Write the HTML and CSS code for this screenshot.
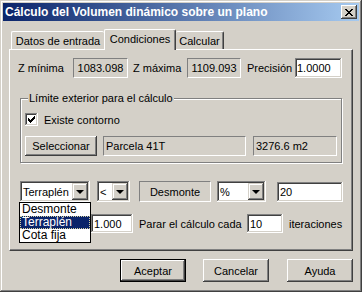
FILE: index.html
```html
<!doctype html>
<html lang="es">
    <head>
        <meta charset="UTF-8" />
        <title>Cálculo del Volumen dinámico sobre un plano</title>
        <link rel="stylesheet" href="styles.css">
    </head>
    <body>
        <div class="window">
            <div class="titlebar">
                <span class="title">Cálculo del Volumen dinámico sobre un plano</span>
                <span class="close">
                    <svg width="8" height="7" viewBox="0 0 8 7">
                        <path d="M0 0h2v1h-2zM6 0h2v1h-2zM1 1h2v1h-2zM5 1h2v1h-2zM2 2h4v1h-4zM3 3h2v1h-2zM2 4h4v1h-4zM1 5h2v1h-2zM5 5h2v1h-2zM0 6h2v1h-2zM6 6h2v1h-2z" fill="#000" />
                    </svg>
                </span>
            </div>

            <div class="tabs">
                <div class="tab tab-datos">Datos de entrada</div>
                <div class="tab tab-cond">Condiciones</div>
                <div class="tab tab-calc">Calcular</div>
            </div>

            <div class="panel">
                <div class="row row-z">
                    <span class="lbl lbl-zmin">Z mínima</span>
                    <span class="static zmin">1083.098</span>
                    <span class="lbl lbl-zmax">Z máxima</span>
                    <span class="static zmax">1109.093</span>
                    <span class="lbl lbl-prec">Precisión</span>
                    <span class="edit prec">1.0000</span>
                </div>

                <div class="group">
                    <div class="group-title">Límite exterior para el cálculo</div>
                    <div class="check-row">
                        <span class="check">
                            <svg width="7" height="7" viewBox="0 0 7 7">
                                <path d="M6 0h1v3h-1zM5 1h1v3h-1zM4 2h1v3h-1zM0 2h1v3h-1zM1 3h1v3h-1zM2 4h1v3h-1zM3 3h1v3h-1z" fill="#000" />
                            </svg>
                        </span>
                        <span class="check-label">Existe contorno</span>
                    </div>
                    <div class="row sel-row">
                        <span class="btn btn-sel">Seleccionar</span>
                        <span class="static parcela">Parcela 41T</span>
                        <span class="static area">3276.6 m2</span>
                    </div>
                </div>

                <div class="row row-cond">
                    <div class="combo combo-tipo">
                        <span class="combo-text">Terraplén</span>
                        <span class="drop"><span class="arrow"></span></span>
                        <ul class="list">
                            <li>Desmonte</li>
                            <li class="selected">Terraplén</li>
                            <li>Cota fija</li>
                        </ul>
                    </div>
                    <div class="combo combo-op">
                        <span class="combo-text">&lt;</span>
                        <span class="drop"><span class="arrow"></span></span>
                    </div>
                    <span class="static ref">Desmonte</span>
                    <div class="combo combo-unit">
                        <span class="combo-text">%</span>
                        <span class="drop"><span class="arrow"></span></span>
                    </div>
                    <span class="edit valor">20</span>
                </div>

                <div class="row row-iter">
                    <span class="edit tol">1.000</span>
                    <span class="lbl lbl-parar">Parar el cálculo cada</span>
                    <span class="edit iter">10</span>
                    <span class="lbl lbl-iter">iteraciones</span>
                </div>
            </div>

            <div class="buttons">
                <span class="btn btn-dlg btn-default">Aceptar</span>
                <span class="btn btn-dlg btn-cancel">Cancelar</span>
                <span class="btn btn-dlg btn-help">Ayuda</span>
            </div>
        </div>
    </body>
</html>
```

FILE: styles.css
```css
* {
    box-sizing: border-box;
}
body {
    margin: 0;
    font-family: "Liberation Sans", Arial, sans-serif;
    font-size: 11px;
    color: #000;
    background: #d4d0c8;
}
.window {
    width: 362px;
    height: 292px;
    padding: 3px;
    background: #d4d0c8;
    box-shadow: inset -1px -1px #404040, inset 1px 1px #d4d0c8,
        inset -2px -2px #808080, inset 2px 2px #fff;
}

/* title bar */
.titlebar {
    height: 18px;
    display: flex;
    align-items: center;
    padding-left: 2px;
    background: linear-gradient(to right, #0a246a, #a6caf0);
}
.title {
    color: #fff;
    font-weight: bold;
    font-size: 12px;
}
.close {
    margin-left: auto;
    margin-right: 2px;
    width: 16px;
    height: 14px;
    display: flex;
    align-items: center;
    justify-content: center;
    background: #d4d0c8;
    box-shadow: inset -1px -1px #404040, inset 1px 1px #fff,
        inset -2px -2px #808080, inset 2px 2px #d4d0c8;
}
.close svg {
    display: block;
}

/* tabs */
.tabs {
    height: 28px;
    display: flex;
    align-items: flex-end;
    padding-left: 8px;
}
.tab {
    height: 18px;
    display: flex;
    align-items: center;
    justify-content: center;
    border-top: 1px solid #fff;
    border-left: 1px solid #fff;
    border-right: 1px solid #404040;
    border-radius: 2px 2px 0 0;
    box-shadow: inset -1px 0 #808080;
}
.tab-datos {
    width: 93px;
    border-right: none;
    box-shadow: none;
}
.tab-cond {
    width: 72px;
    height: 21px;
    margin-bottom: -1px;
    padding-bottom: 3px;
    position: relative;
    z-index: 1;
    background: #d4d0c8;
}
.tab-calc {
    width: 48px;
    border-left: none;
}

/* panel */
.panel {
    margin: 0 6px;
    height: 202px;
    padding: 8px 0 0 8px;
    border-top: 1px solid #fff;
    border-left: 1px solid #fff;
    border-right: 1px solid #404040;
    border-bottom: 1px solid #404040;
    box-shadow: inset -1px -1px #808080;
}
.row {
    display: flex;
    align-items: center;
}
.static {
    height: 20px;
    display: flex;
    align-items: center;
    padding-left: 2px;
    border-top: 1px solid #808080;
    border-left: 1px solid #808080;
    border-right: 1px solid #fff;
    border-bottom: 1px solid #fff;
}
.edit {
    height: 20px;
    display: flex;
    align-items: center;
    padding-left: 3px;
    background: #fff;
    box-shadow: inset -1px -1px #fff, inset 1px 1px #808080,
        inset -2px -2px #d4d0c8, inset 2px 2px #404040;
}
.btn {
    display: flex;
    align-items: center;
    justify-content: center;
    background: #d4d0c8;
    box-shadow: inset -1px -1px #404040, inset 1px 1px #fff,
        inset -2px -2px #808080, inset 2px 2px #d4d0c8;
}

/* row: z */
.row-z {
    height: 20px;
}
.lbl-zmin {
    width: 55px;
}
.zmin {
    width: 55px;
    justify-content: center;
    padding-left: 0;
}
.lbl-zmax {
    width: 54px;
    margin-left: 5px;
}
.zmax {
    width: 54px;
    justify-content: center;
    padding-left: 0;
}
.lbl-prec {
    width: 48px;
    margin-left: 6px;
}
.prec {
    width: 47px;
    padding-left: 2px;
}

/* group */
.group {
    margin: 20px 0 0 2px;
    width: 322px;
    height: 65px;
    padding-left: 4px;
    border: 1px solid #808080;
    box-shadow: 1px 1px #fff, inset 1px 1px #fff;
}
.group-title {
    width: fit-content;
    line-height: 13px;
    margin: -7px 0 0 3px;
    padding: 0 1px;
    background: #d4d0c8;
}
.check-row {
    margin-top: 8px;
    height: 13px;
    display: flex;
    align-items: center;
}
.check {
    width: 13px;
    height: 13px;
    display: flex;
    align-items: center;
    justify-content: center;
    background: #fff;
    box-shadow: inset -1px -1px #fff, inset 1px 1px #808080,
        inset -2px -2px #d4d0c8, inset 2px 2px #404040;
}
.check svg {
    display: block;
}
.check-label {
    margin-left: 6px;
}
.sel-row {
    margin-top: 10px;
    height: 20px;
}
.btn-sel {
    width: 72px;
    height: 20px;
}
.parcela {
    width: 143px;
    margin-left: 6px;
}
.area {
    width: 84px;
    margin-left: 7px;
}

/* row: condition */
.row-cond {
    margin: 18px 0 0 2px;
    height: 21px;
}
.combo {
    position: relative;
    height: 21px;
    display: flex;
    align-items: center;
    padding: 2px;
    background: #fff;
    box-shadow: inset -1px -1px #fff, inset 1px 1px #808080,
        inset -2px -2px #d4d0c8, inset 2px 2px #404040;
}
.combo-text {
    flex: 1;
    padding-left: 1px;
}
.drop {
    width: 16px;
    height: 17px;
    display: flex;
    align-items: center;
    justify-content: center;
    background: #d4d0c8;
    box-shadow: inset -1px -1px #404040, inset 1px 1px #d4d0c8,
        inset -2px -2px #808080, inset 2px 2px #fff;
}
.arrow {
    width: 0;
    height: 0;
    border-left: 4px solid transparent;
    border-right: 4px solid transparent;
    border-top: 4px solid #000;
    margin-top: 1px;
}
.combo-tipo {
    width: 70px;
}
.combo-op {
    width: 33px;
    margin-left: 7px;
}
.ref {
    width: 72px;
    height: 21px;
    margin-left: 9px;
    justify-content: center;
    padding-left: 0;
}
.combo-unit {
    width: 49px;
    margin-left: 6px;
}
.valor {
    width: 66px;
    margin-left: 11px;
}
.list {
    position: absolute;
    top: 21px;
    left: -1px;
    width: 72px;
    margin: 0;
    padding: 0;
    list-style: none;
    background: #fff;
    border: 1px solid #000;
    font-size: 12px;
    z-index: 2;
}
.list li {
    height: 13px;
    line-height: 13px;
    padding-left: 2px;
}
.list .selected {
    background: #0a246a;
    color: #fff;
    outline: 1px dotted #d4d0a0;
    outline-offset: -1px;
}

/* row: iterations */
.row-iter {
    margin-top: 12px;
    height: 19px;
}
.tol {
    width: 42px;
    height: 19px;
    margin-left: 73px;
}
.lbl-parar {
    margin-left: 6px;
    width: 108px;
}
.iter {
    width: 36px;
    height: 19px;
}
.lbl-iter {
    margin-left: 6px;
}

/* dialog buttons */
.buttons {
    margin-top: 8px;
    display: flex;
    padding-left: 117px;
}
.btn-dlg {
    width: 66px;
    height: 23px;
}
.btn-default {
    border: 1px solid #000;
}
.btn-cancel {
    margin-left: 17px;
}
.btn-help {
    margin-left: 18px;
}
```
